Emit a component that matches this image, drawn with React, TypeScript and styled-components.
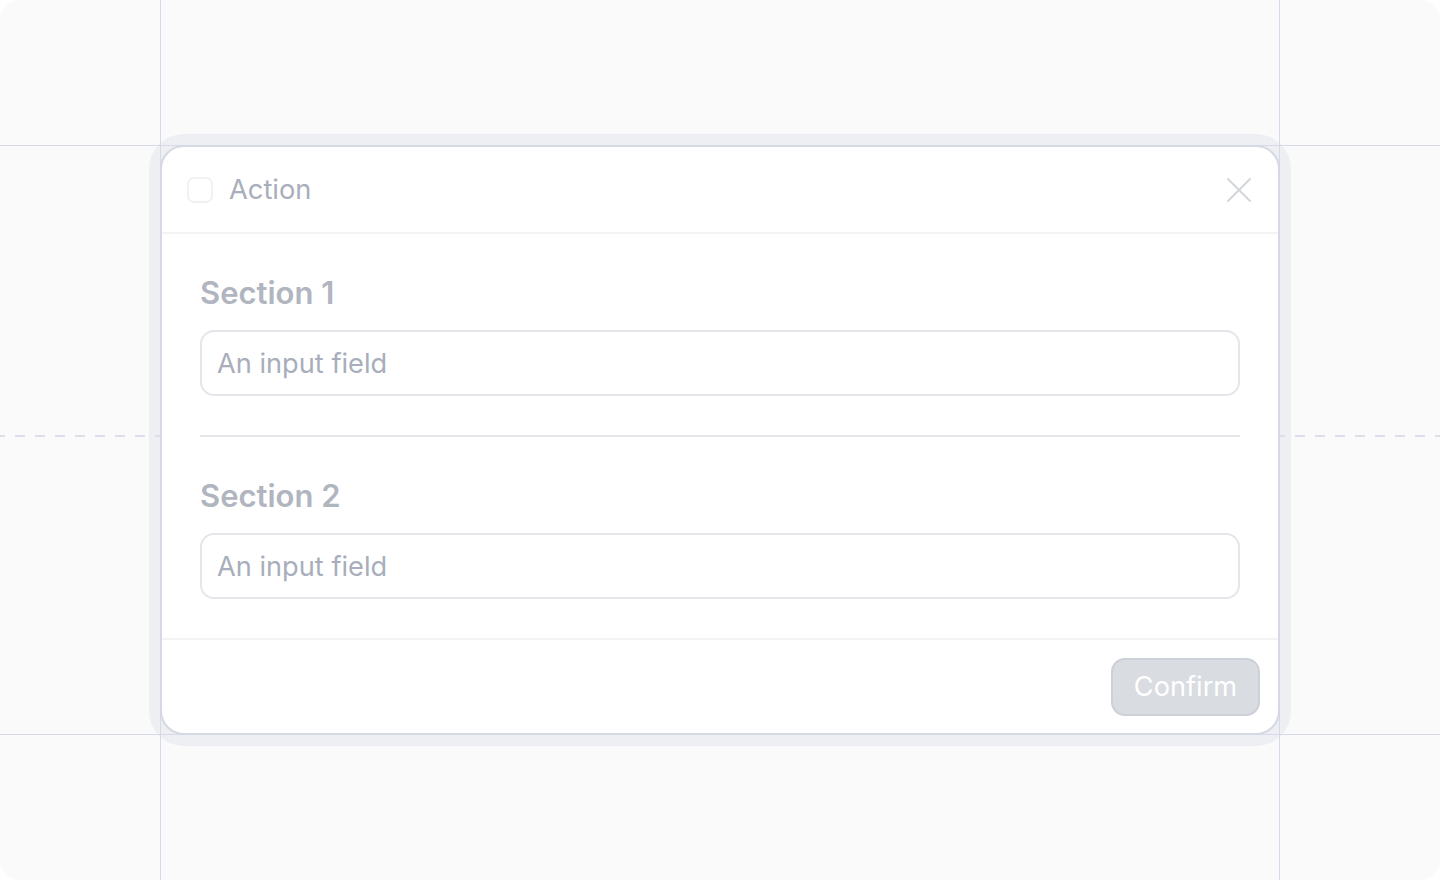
import React from "react";
import styled, { createGlobalStyle } from "styled-components";

const Global = createGlobalStyle`
  html, body { margin: 0; padding: 0; background: #ffffff; }
  body { font-family: Inter, "Noto Sans", "Liberation Sans", sans-serif; }
  * { box-sizing: border-box; }
`;

const Canvas = styled.div`
  position: relative;
  width: 1440px;
  height: 880px;
  background: #fafafa;
  border-radius: 20px;
  overflow: hidden;
  padding: 145px 160px;
  display: flex;
  isolation: isolate;
`;

const VLine = styled.div<{ $x: number }>`
  position: absolute;
  top: 0;
  bottom: 0;
  left: ${(p) => p.$x}px;
  width: 1px;
  background: #d6d9e9;
  z-index: 1;
`;

const HLine = styled.div<{ $y: number }>`
  position: absolute;
  left: 0;
  right: 0;
  top: ${(p) => p.$y}px;
  height: 1px;
  background: #d6d9e9;
  z-index: 1;
`;

const DashLine = styled.div`
  position: absolute;
  left: 0;
  right: 0;
  top: 435px;
  height: 2px;
  background: repeating-linear-gradient(
    to right,
    #dcdee9 0px,
    #dcdee9 5px,
    transparent 5px,
    transparent 15px,
    #dcdee9 15px,
    #dcdee9 20px
  );
  z-index: 1;
`;

const Ring = styled.div`
  position: absolute;
  left: 149px;
  top: 134px;
  width: 1142px;
  height: 612px;
  border-radius: 35px;
  background: #edeff2;
  z-index: 0;
`;

const Dialog = styled.div`
  position: relative;
  z-index: 2;
  flex: 1;
  display: flex;
  flex-direction: column;
  background: #ffffff;
  border: 2px solid #d6d9e1;
  border-radius: 24px;
  overflow: hidden;
`;

const Header = styled.div`
  height: 87px;
  flex-shrink: 0;
  display: flex;
  align-items: center;
  padding: 0 26px 0 25px;
  border-bottom: 2px solid #f2f3f5;
`;

const Check = styled.div`
  width: 26px;
  height: 26px;
  border: 2px solid #f0f1f3;
  border-radius: 7px;
  margin-right: 16px;
`;

const Title = styled.div`
  flex: 1;
  font-size: 27.3px;
  color: #a8aebb;
  font-weight: 400;
`;

const CloseBtn = styled.div`
  width: 26px;
  height: 26px;
  display: flex;
  align-items: center;
  justify-content: center;
`;

const Body = styled.div`
  flex: 1;
  display: flex;
  flex-direction: column;
  padding: 40px 38px 38px 38px;
`;

const Section = styled.div`
  display: flex;
  flex-direction: column;
  gap: 18px;
`;

const SectionTitle = styled.div`
  font-size: 31px;
  font-weight: 600;
  color: #b0b5c0;
  line-height: 38px;
`;

const Input = styled.input`
  height: 66px;
  width: 100%;
  border: 2px solid #e4e6ea;
  border-radius: 14px;
  padding: 0 15px;
  font-family: inherit;
  font-size: 27.2px;
  color: #a8aebb;
  outline: none;
  background: #fff;
  &::placeholder { color: #a8aebb; }
`;

const Divider = styled.div`
  height: 2px;
  background: #e4e6ea;
  margin: 39px 0 40px;
`;

const Footer = styled.div`
  height: 95px;
  flex-shrink: 0;
  border-top: 2px solid #f2f3f5;
  display: flex;
  align-items: center;
  justify-content: flex-end;
  padding: 0 18px;
`;

const Confirm = styled.button`
  width: 149px;
  height: 58px;
  border-radius: 14px;
  background: #d9dce1;
  border: 2px solid #ccd0d7;
  color: #ffffff;
  font-family: inherit;
  font-size: 27.2px;
  font-weight: 400;
  padding: 0;
`;

export default function App() {
  return (
    <>
      <Global />
      <Canvas>
        <Ring />
        <VLine $x={160} />
        <VLine $x={1279} />
        <HLine $y={145} />
        <HLine $y={734} />
        <DashLine />
        <Dialog>
          <Header>
            <Check />
            <Title>Action</Title>
            <CloseBtn>
              <svg width="26" height="26" viewBox="0 0 26 26" fill="none">
                <path d="M2 2L24 24M24 2L2 24" stroke="#d3d6dd" strokeWidth="2" strokeLinecap="round" />
              </svg>
            </CloseBtn>
          </Header>
          <Body>
            <Section>
              <SectionTitle>Section 1</SectionTitle>
              <Input placeholder="An input field" readOnly />
            </Section>
            <Divider />
            <Section>
              <SectionTitle>Section 2</SectionTitle>
              <Input placeholder="An input field" readOnly />
            </Section>
          </Body>
          <Footer>
            <Confirm>Confirm</Confirm>
          </Footer>
        </Dialog>
      </Canvas>
    </>
  );
}
